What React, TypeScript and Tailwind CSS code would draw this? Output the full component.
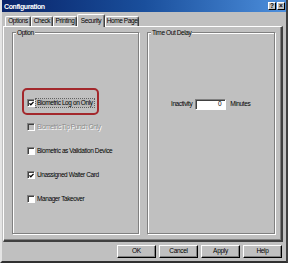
import React from "react";

const font = { fontFamily: '"Liberation Sans", Arial, sans-serif' };

const tabs = [
  { label: "Options", cls: "w-[26px]" },
  { label: "Check", cls: "w-[22px]" },
  { label: "Printing", cls: "w-[24px]" },
  { label: "Security", cls: "w-[28px]", active: true },
  { label: "Home Page", cls: "w-[34px]" },
];

function Box({ checked, disabled }: { checked?: boolean; disabled?: boolean }) {
  return (
    <span
      className={`relative block w-[8px] h-[8px] shrink-0 border border-t-[#808080] border-l-[#808080] border-r-white border-b-white shadow-[inset_1px_1px_0_#404040] ${
        disabled ? "bg-[#c0c0c0]" : "bg-white"
      }`}
    >
      {checked && (
        <svg viewBox="0 0 6 6" className="absolute left-[1px] top-[1px] w-[5px] h-[5px]">
          <polyline points="0.5,2.8 2.2,4.5 5.5,1" fill="none" stroke="#000" strokeWidth="1.5" />
        </svg>
      )}
    </span>
  );
}

function Row({
  label,
  checked,
  disabled,
  focus,
}: {
  label: string;
  checked?: boolean;
  disabled?: boolean;
  focus?: boolean;
}) {
  return (
    <div className="relative flex h-[10px] items-center gap-[1px]">
      <Box checked={checked} disabled={disabled} />
      <span
        className={`px-[1px] text-[6.5px] leading-[8px] tracking-[-0.4px] whitespace-nowrap ${
          disabled
            ? "text-[#8c8c8c] [text-shadow:1px_1px_0_#fff]"
            : "text-black"
        } ${focus ? "outline outline-1 outline-dotted outline-[#606060] bg-[#b8b8b8]" : ""}`}
      >
        {label}
      </span>
      {focus && (
        <span className="pointer-events-none absolute -left-[5px] -top-[10px] h-[27px] w-[77px] rounded-[5px] border-2 border-[#a3282c]" />
      )}
    </div>
  );
}

function Button({ label }: { label: string }) {
  return (
    <button className="flex h-[13px] w-[39px] items-center justify-center border-t border-l border-t-white border-l-white border-r border-b border-r-black border-b-black bg-[#c0c0c0] text-[6.5px] leading-none tracking-[-0.3px] text-black shadow-[inset_-1px_-1px_0_#808080]">
      {label}
    </button>
  );
}

export default function App() {
  return (
    <div
      className="flex h-[263px] w-[288px] flex-col overflow-hidden border-l-2 border-r-2 border-b-2 border-l-[#e4e4e4] border-r-[#404040] border-b-[#303030] bg-[#c0c0c0]"
      style={font}
    >
      {/* title bar */}
      <div className="flex h-[12px] shrink-0 items-center bg-gradient-to-r from-[#0a246a] via-[#1a4f9c] to-[#4d8fdc] pl-[2px] pr-[1px]">
        <span className="text-[7px] font-bold leading-none tracking-[-0.4px] text-white">Configuration</span>
        <div className="ml-auto flex gap-[1px]">
          <span className="flex h-[8px] w-[8px] items-center justify-center border-t border-l border-white border-r border-b border-r-black border-b-black bg-[#c0c0c0] text-[6.5px] font-bold leading-none text-black">
            ?
          </span>
          <span className="flex h-[8px] w-[8px] items-center justify-center border-t border-l border-white border-r border-b border-r-black border-b-black bg-[#c0c0c0] text-[6.5px] font-bold leading-none text-black">
            ×
          </span>
        </div>
      </div>

      {/* tabs */}
      <div className="mt-[2px] flex h-[12px] shrink-0 items-end pl-[3px]">
        {tabs.map((t) =>
          t.active ? (
            <div
              key={t.label}
              className={`${t.cls} relative z-10 -mb-[1px] flex h-[13px] items-start justify-center whitespace-nowrap rounded-t-[2px] border-t border-l border-t-white border-l-white border-r border-r-[#404040] bg-[#c0c0c0] pt-[2px] text-[6.5px] leading-[8px] tracking-[-0.4px] text-black shadow-[inset_-1px_0_0_#808080]`}
            >
              {t.label}
            </div>
          ) : (
            <div
              key={t.label}
              className={`${t.cls} flex h-[10px] items-center justify-center whitespace-nowrap rounded-t-[2px] border-t border-l border-t-white border-l-white border-r border-r-[#404040] text-[6.5px] leading-none tracking-[-0.4px] text-black shadow-[inset_-1px_0_0_#808080]`}
            >
              {t.label}
            </div>
          )
        )}
      </div>

      {/* panel */}
      <div className="ml-[1px] flex h-[216px] w-[280px] shrink-0 gap-[8px] border-t border-l border-t-white border-l-white border-r-2 border-b-2 border-r-[#404040] border-b-[#404040] pl-[8px] pt-[2px] shadow-[inset_-1px_-1px_0_#808080]">
        <fieldset className="h-[205px] w-[127px] border border-[#808080] shadow-[1px_1px_0_#fff,inset_1px_1px_0_#fff]">
          <legend className="ml-[3px] bg-[#c0c0c0] px-[1px] text-[6.5px] leading-[7px] tracking-[-0.4px] text-black">Option</legend>
          <div className="flex flex-col gap-[14px] pl-[14px] pt-[62px]">
            <Row label="Biometric Log on Only" checked focus />
            <Row label="Biometric Tip Punch Only" disabled />
            <Row label="Biometric as Validation Device" />
            <Row label="Unassigned Waiter Card" checked />
            <Row label="Manager Takeover" />
          </div>
        </fieldset>
        <fieldset className="h-[205px] w-[128px] border border-[#808080] shadow-[1px_1px_0_#fff,inset_1px_1px_0_#fff]">
          <legend className="ml-[3px] bg-[#c0c0c0] px-[1px] text-[6.5px] leading-[7px] tracking-[-0.4px] text-black">Time Out Delay</legend>
          <div className="flex items-center pl-[23px] pt-[63px] text-[6.5px] leading-none tracking-[-0.4px] text-black">
            <span>Inactivity</span>
            <span className="ml-[3px] flex h-[11px] w-[31px] items-center justify-end border border-t-[#808080] border-l-[#808080] border-r-white border-b-white bg-white pr-[4px] shadow-[inset_1px_1px_0_#404040]">
              0
            </span>
            <span className="ml-[4px]">Minutes</span>
          </div>
        </fieldset>
      </div>

      {/* buttons */}
      <div className="mt-[3px] flex shrink-0 justify-end gap-[3px] pr-[4px]">
        <Button label="OK" />
        <Button label="Cancel" />
        <Button label="Apply" />
        <Button label="Help" />
      </div>
    </div>
  );
}
